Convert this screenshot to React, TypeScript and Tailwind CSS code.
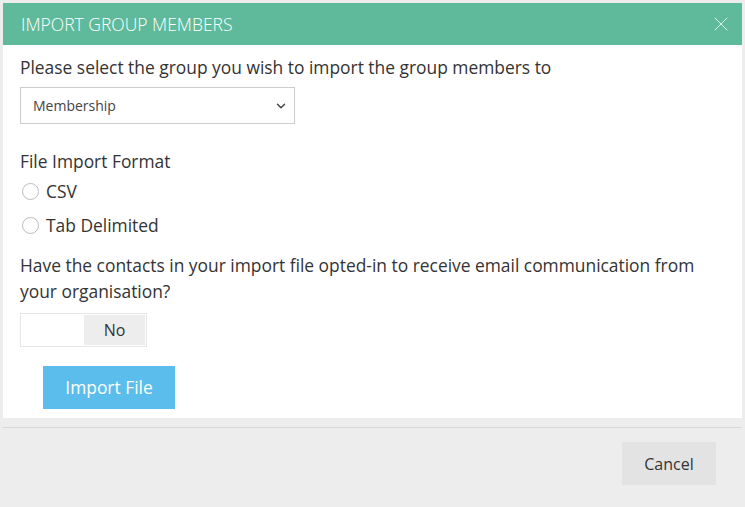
import { X, ChevronDown } from 'lucide-react';

export default function App() {
  return (
    <div className="w-[745px] h-[507px] bg-[#ededed] pt-[3px] px-[3px] font-['Open_Sans',sans-serif] text-[#333]">
      <div className="h-[42px] bg-[#5fba9c] flex items-center justify-between pl-[18px] pr-[9px]">
        <h1 className="text-[17.5px] font-light text-white">IMPORT GROUP MEMBERS</h1>
        <X className="w-[24px] h-[24px] text-white/80" strokeWidth={1} />
      </div>

      <div className="bg-white h-[373px] pl-[17px] pt-[9px]">
        <p className="text-[17.4px] leading-[26px]">Please select the group you wish to import the group members to</p>
        <div className="mt-[7px] w-[275px] h-[37px] border border-[#ccc] flex items-center justify-between pl-[12px] pr-[6px]">
          <span className="text-[14px] text-[#444]">Membership</span>
          <ChevronDown className="w-[14px] h-[14px] text-[#444]" strokeWidth={2.5} />
        </div>

        <p className="mt-[24px] text-[17.4px] leading-[26px]">File Import Format</p>
        <div className="mt-[4px] flex flex-col gap-[8px]">
          {['CSV', 'Tab Delimited'].map((label) => (
            <label key={label} className="flex items-center gap-[7px] pl-[2px] h-[26px]">
              <span className="w-[17px] h-[17px] rounded-full border border-[#bbb] bg-white" />
              <span className="text-[17.4px]">{label}</span>
            </label>
          ))}
        </div>

        <p className="mt-[14px] text-[17.4px] leading-[26px] pr-[30px]">
          Have the contacts in your import file opted-in to receive email communication from your organisation?
        </p>
        <div className="mt-[9px] w-[127px] h-[34px] border border-[#e6e6e6] flex p-[1px]">
          <div className="w-[62px] bg-white" />
          <div className="flex-1 bg-[#ededed] flex items-center justify-center text-[16px] text-[#333]">No</div>
        </div>

        <button className="mt-[19px] ml-[23px] w-[132px] h-[43px] bg-[#5bbdec] text-white text-[17.4px]">
          Import File
        </button>
      </div>

      <div className="mt-[9px] border-t border-[#d8d8d8] flex justify-end pr-[26px] pt-[14px]">
        <button className="w-[94px] h-[43px] bg-[#e3e3e3] text-[16px] text-[#333]">Cancel</button>
      </div>
    </div>
  );
}
